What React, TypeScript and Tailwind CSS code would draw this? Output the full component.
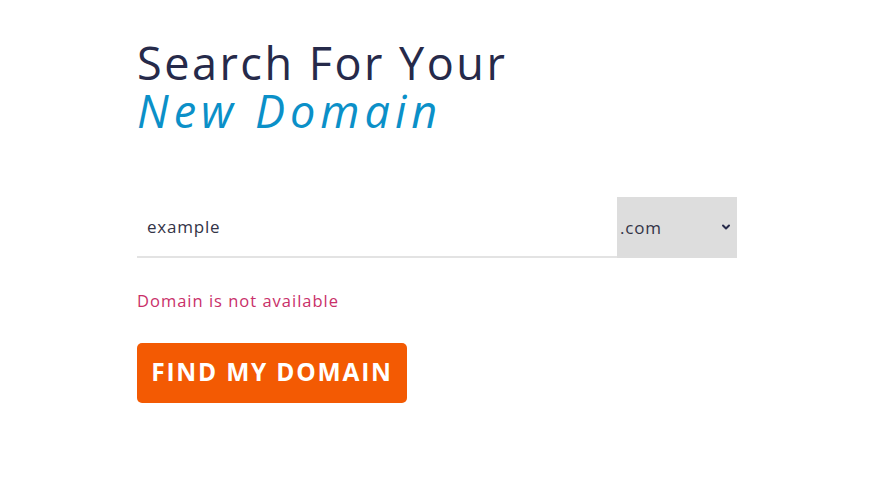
import { ChevronDown } from "lucide-react"

const App = () => {
    return (
        <div className="min-h-screen bg-white font-['Open_Sans',sans-serif]">
            <div className="ml-[137px] w-[600px] pt-[39px]">
                {/* titulo */}
                <h1 className="text-[45px] leading-[48px] font-normal text-[#262a4a] tracking-[2.5px]">
                    Search For Your
                    <br />
                    <span className="italic tracking-[5px] text-[#0b90c8]">New Domain</span>
                </h1>

                {/* busca */}
                <div className="mt-[62px] flex h-[61px] border-b-2 border-[#e3e3e3]">
                    <input
                        defaultValue="example"
                        className="flex-1 bg-white px-[10px] text-[17px] tracking-[0.8px] text-[#333447] outline-none"
                    />
                    <div className="relative -mb-[2px] w-[120px] bg-[#dddddd]">
                        <span className="absolute left-[3px] top-[18px] text-[17px] tracking-[0.8px] text-[#333447]">.com</span>
                        <ChevronDown className="absolute right-[5px] top-[24px] h-[12px] w-[12px] text-[#262a4a]" strokeWidth={4} />
                    </div>
                </div>

                <p className="mt-[31px] text-[16.5px] tracking-[1px] text-[#c93069]">Domain is not available</p>

                <button className="mt-[29px] h-[60px] w-[270px] rounded-[5px] bg-[#f35a03] text-[24.5px] font-bold uppercase tracking-[1.8px] text-white">
                    Find My Domain
                </button>
            </div>
        </div>
    )
}

export default App
